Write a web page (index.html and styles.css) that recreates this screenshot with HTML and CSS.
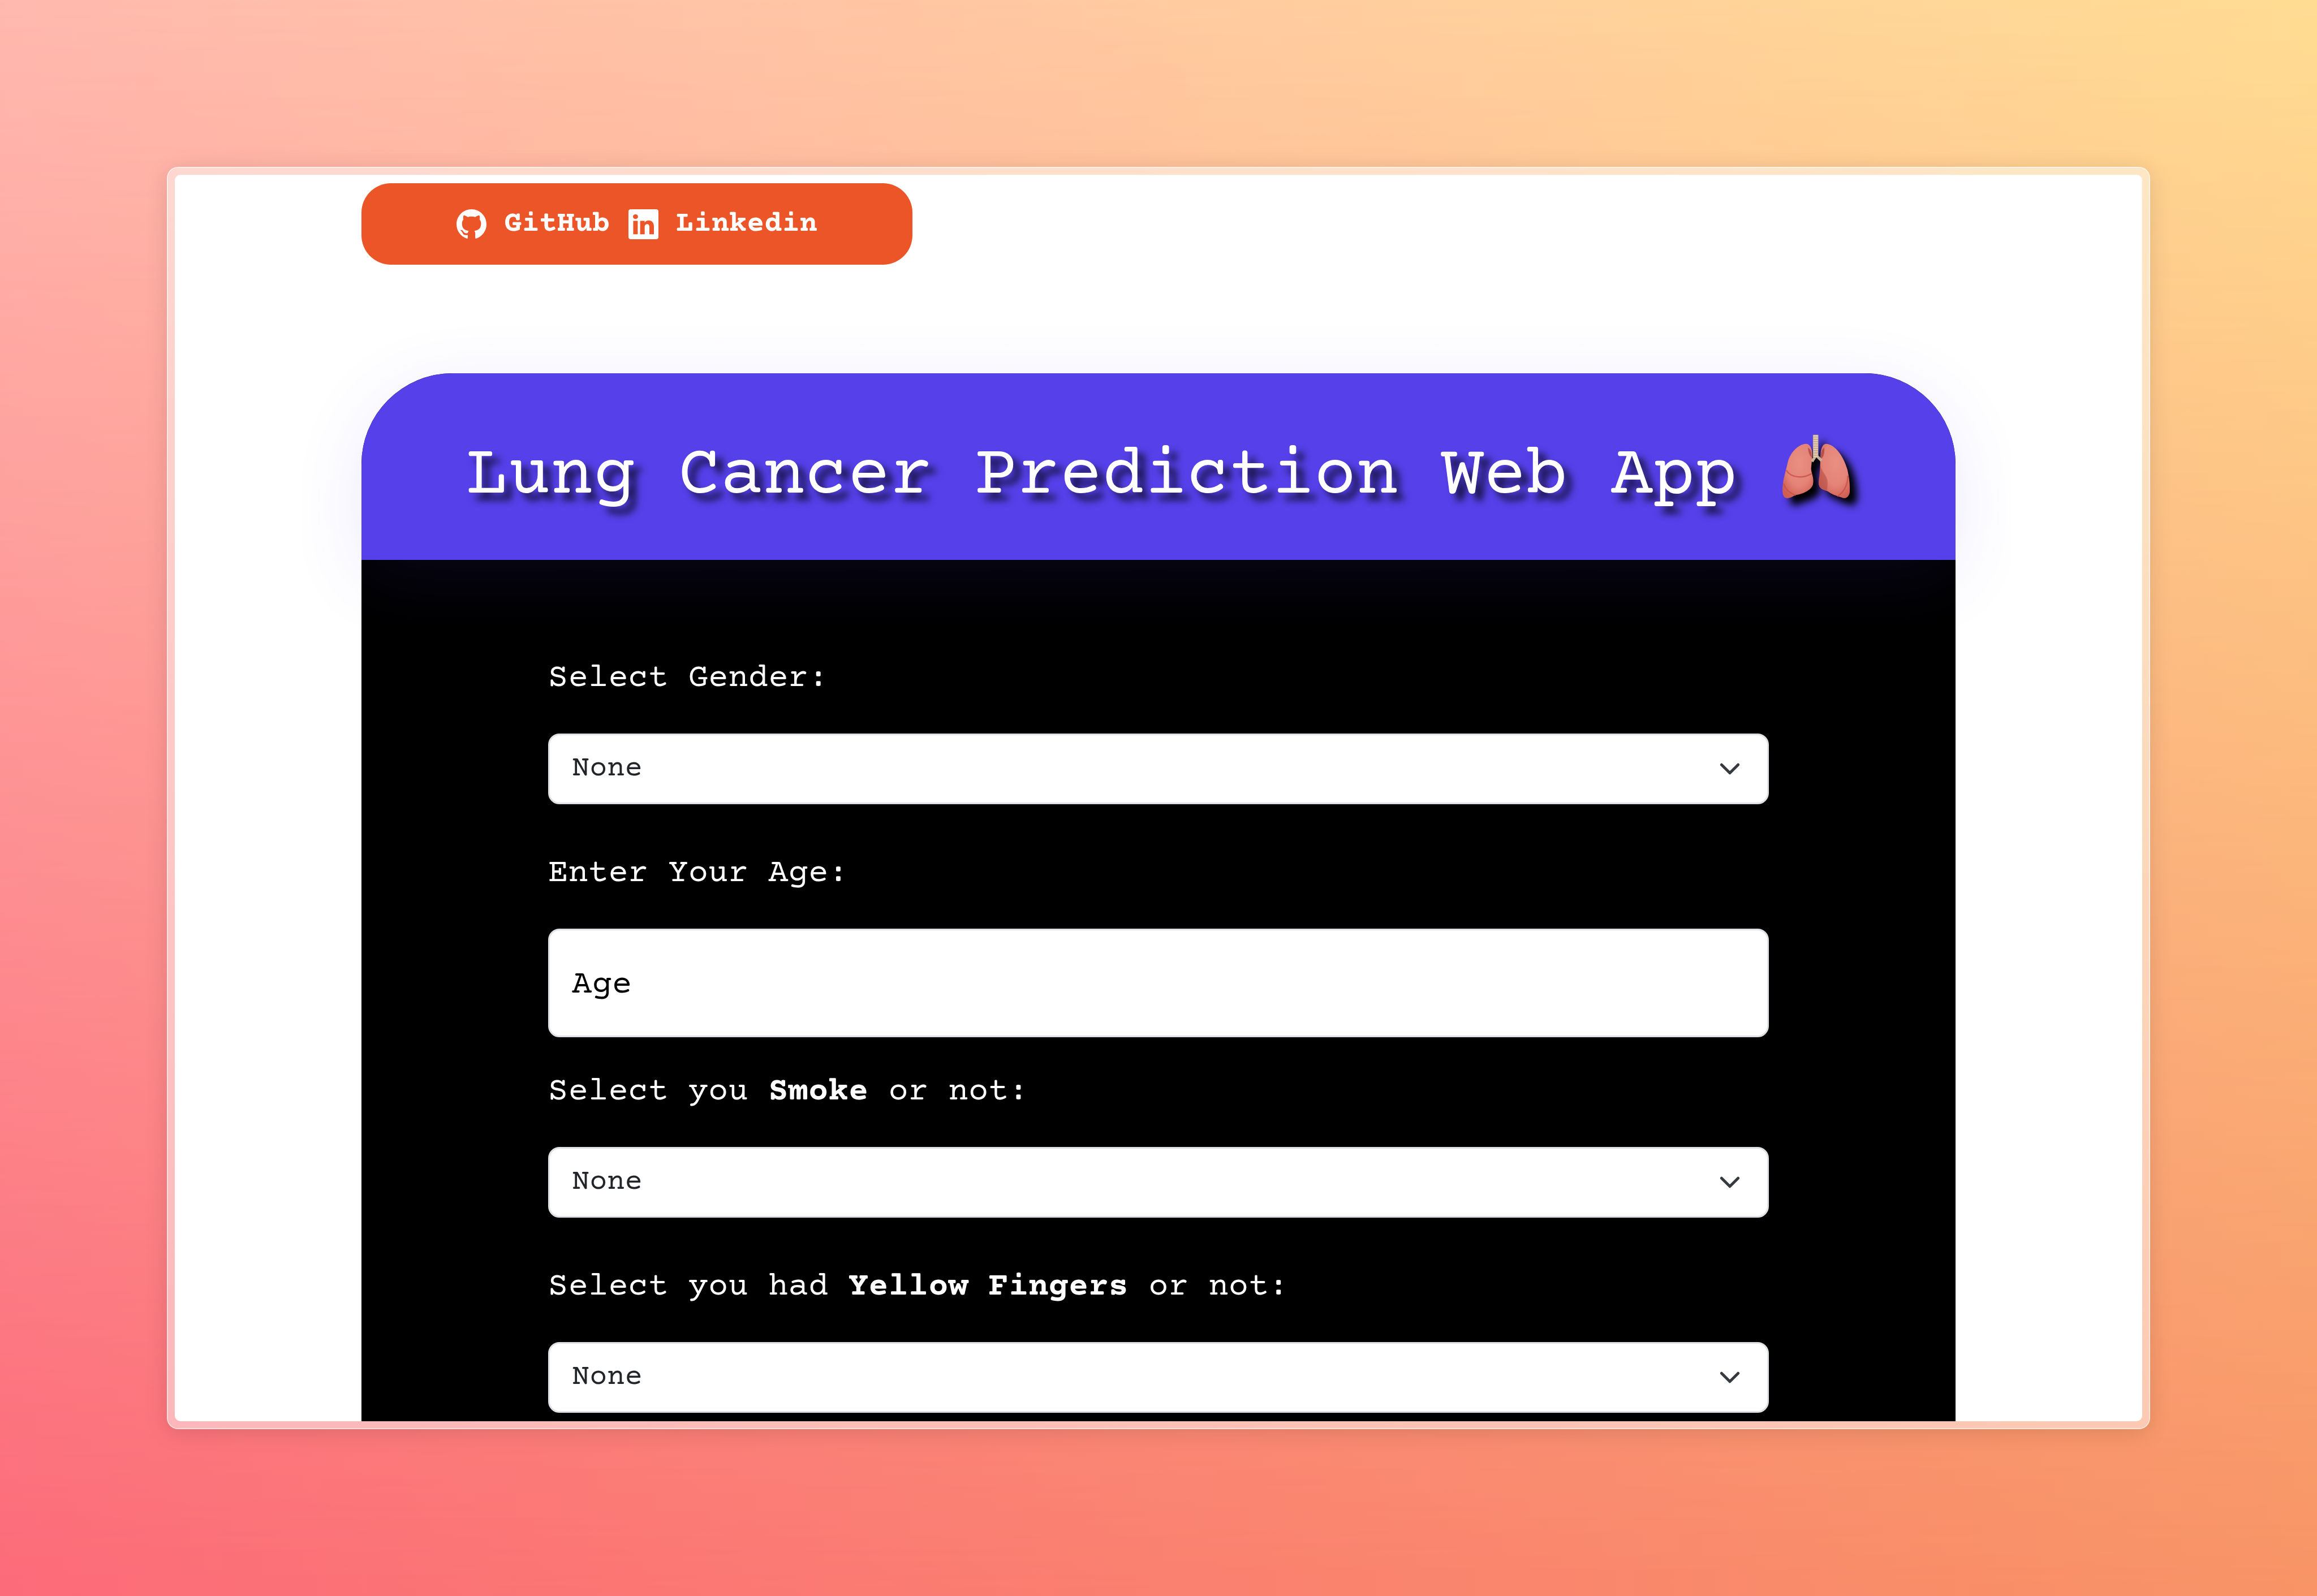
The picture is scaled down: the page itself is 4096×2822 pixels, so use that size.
FILE: index.html
```html
<!DOCTYPE html>
<html lang="en">
<head>
<meta charset="utf-8">
<meta name="viewport" content="width=device-width, initial-scale=1">
<title>Lung Cancer Prediction Web App</title>
<link rel="stylesheet" href="styles.css">
</head>
<body>
<div class="frame">
  <main class="page">
    <nav class="links">
      <a class="link" href="https://github.com/">
        <svg class="link-icon" viewBox="0 0 16 16" aria-hidden="true"><path d="M8 0C3.58 0 0 3.58 0 8c0 3.54 2.29 6.53 5.47 7.59.4.07.55-.17.55-.38 0-.19-.01-.82-.01-1.49-2.01.37-2.53-.49-2.69-.94-.09-.23-.48-.94-.82-1.13-.28-.15-.68-.52-.01-.53.63-.01 1.08.58 1.23.82.72 1.21 1.87.87 2.33.66.07-.52.28-.87.51-1.07-1.78-.2-3.64-.89-3.64-3.95 0-.87.31-1.59.82-2.15-.08-.2-.36-1.02.08-2.12 0 0 .67-.21 2.2.82.64-.18 1.32-.27 2-.27s1.36.09 2 .27c1.53-1.04 2.2-.82 2.2-.82.44 1.1.16 1.92.08 2.12.51.56.82 1.27.82 2.15 0 3.07-1.87 3.75-3.65 3.95.29.25.54.73.54 1.48 0 1.07-.01 1.93-.01 2.2 0 .21.15.46.55.38A8.01 8.01 0 0 0 16 8c0-4.42-3.58-8-8-8"/></svg>
        <span>GitHub</span>
      </a>
      <a class="link" href="https://www.linkedin.com/">
        <svg class="link-icon" viewBox="0 0 16 16" aria-hidden="true"><path d="M0 1.146C0 .513.526 0 1.175 0h13.65C15.474 0 16 .513 16 1.146v13.708c0 .633-.526 1.146-1.175 1.146H1.175C.526 16 0 15.487 0 14.854zm4.943 12.248V6.169H2.542v7.225zm-1.2-8.212c.837 0 1.358-.554 1.358-1.248-.015-.709-.52-1.248-1.342-1.248S2.4 3.226 2.4 3.934c0 .694.521 1.248 1.327 1.248zm4.908 8.212V9.359c0-.216.016-.432.08-.586.173-.431.568-.878 1.232-.878.869 0 1.216.662 1.216 1.634v3.865h2.401V9.25c0-2.22-1.184-3.252-2.764-3.252-1.274 0-1.845.7-2.165 1.193v.025h-.016l.016-.025V6.169h-2.4c.03.678 0 7.225 0 7.225z"/></svg>
        <span>Linkedin</span>
      </a>
    </nav>
    <section class="card">
      <header class="card-header">
        <h1 class="title">Lung Cancer Prediction Web App <svg class="lungs" viewBox="0 0 148 142" role="img" aria-label="Lungs">
          <defs>
            <radialGradient id="lobe" cx=".55" cy=".35" r=".7"><stop offset="0" stop-color="#e98f83"/><stop offset=".6" stop-color="#e58378"/><stop offset="1" stop-color="#cf5d52"/></radialGradient>
          </defs>
          <path d="M52 21C60 21 64 30 65 38C67 50 64 60 63 76C64 88 70 96 67 111C62 125 42 132 28 134C18 140 10 143 5 139C-2 132 0 118 1 108C3 94 8 78 12 60C18 40 34 22 52 21Z" fill="url(#lobe)"/>
          <path d="M95 21C88 22 85 32 84 42C83 60 83 76 82 88C80 100 78 110 82 116C88 124 96 122 102 127C112 134 122 136 130 139C138 143 146 139 148 128C149 112 147 96 143 78C134 46 114 21 95 21Z" fill="url(#lobe)"/>
          <path d="M56 29C63 33 65 42 65 52C60 48 57 40 56 29ZM92 29C86 33 84 42 84 54C91 51 93 41 92 29Z" fill="#a6433e" opacity=".75"/>
          <path d="M83 68C86 82 98 92 99 102C100 112 98 118 98 124C90 122 82 120 80 110C79 98 82 86 83 68Z" fill="#b64e46" opacity=".6"/>
          <path d="M9 80C20 98 48 96 63 87M3 110C8 124 18 130 28 134M144 92C144 112 134 128 122 136" fill="none" stroke="#c85046" stroke-width="3" stroke-linecap="round" opacity=".8"/>
          <path d="M74 46L65 60M74 46L86 58" fill="none" stroke="#c9b095" stroke-width="6"/>
          <path d="M73 1V50" fill="none" stroke="#c4a88c" stroke-width="12"/>
          <path d="M73 2V50" fill="none" stroke="#e0cdb4" stroke-width="10" stroke-dasharray="3 2"/>
        </svg></h1>
      </header>
      <form class="form">
        <label class="label" for="gender">Select Gender:</label>
        <select class="select" id="gender"><option>None</option><option>Male</option><option>Female</option></select>
        <label class="label" for="age">Enter Your Age:</label>
        <input class="input" id="age" type="text" inputmode="numeric" placeholder="Age">
        <label class="label" for="smoke">Select you <b>Smoke</b> or not:</label>
        <select class="select" id="smoke"><option>None</option><option>Yes</option><option>No</option></select>
        <label class="label" for="fingers">Select you had <b>Yellow Fingers</b> or not:</label>
        <select class="select" id="fingers"><option>None</option><option>Yes</option><option>No</option></select>
      </form>
    </section>
  </main>
</div>
</body>
</html>
```
FILE: styles.css
```css
*, *::before { box-sizing: border-box; }

body {
  margin: 0;
  height: 100vh;
  padding: 295px;
  position: relative;
  overflow: hidden;
  background: linear-gradient(to right, #fc6b79, #f89466);
  font-family: "Courier Prime", "Nimbus Mono PS", FreeMono, "Courier New", "Liberation Mono", monospace;
  font-size: 52px;
}

/* warm upper tones fading into the stronger lower ones */
body::before {
  content: "";
  position: absolute;
  inset: 0;
  background: linear-gradient(to right, #ffb9ae, #ffdc93);
  mask-image: linear-gradient(to bottom, #000, transparent);
}

.frame {
  position: relative;
  height: 100%;
  padding: 12px;
  border: 2px solid rgba(255, 255, 255, .75);
  border-radius: 20px;
  background: rgba(255, 255, 255, .48);
  background-clip: padding-box;
  box-shadow: 0 6px 40px rgba(0, 0, 0, .12);
}

.page {
  height: 100%;
  overflow: hidden;
  padding: 15px 330px 0;
  border-radius: 10px;
  background: #fff;
}

.links {
  display: flex;
  align-items: center;
  justify-content: center;
  gap: 33px;
  width: 974px;
  height: 144px;
  border-radius: 52px;
  background: #ec5528;
}

.link {
  display: flex;
  align-items: center;
  gap: 31px;
  color: #fff;
  font-weight: 700;
  text-decoration: none;
}

.link-icon {
  width: 53px;
  height: 53px;
  fill: currentColor;
}

.card {
  margin-top: 192px;
  border-radius: 161px 161px 0 0;
  background: #000;
}

.card-header {
  position: relative;
  height: 330px;
  padding-top: 108px;
  border-radius: 161px 161px 0 0;
  background: #5540e9;
  box-shadow: 0 26px 129px rgba(85, 64, 233, .11);
}

.title {
  margin: 0;
  color: #fff;
  font-size: 125px;
  font-weight: 400;
  line-height: 150px;
  text-align: center;
  white-space: nowrap;
  text-shadow: 13px 13px 13px rgba(0, 0, 0, .75);
}

.lungs {
  width: 119px;
  height: 114px;
  margin: 0 2px 0 4px;
  vertical-align: -11px;
  overflow: visible;
  filter: drop-shadow(13px 13px 7px #000);
}

.form {
  display: flex;
  flex-direction: column;
  padding: 166px 330px;
}

.label {
  margin-bottom: 53px;
  color: #fff;
  font-size: 59px;
  line-height: 88px;
}

.select,
.input {
  width: 100%;
  border: 3px solid #dee2e6;
  border-radius: 20px;
  background-color: #fff;
  font-family: inherit;
}

.select {
  appearance: none;
  height: 125px;
  margin: 0 0 79px;
  padding: 0 116px 0 39px;
  color: #212529;
  font-size: 52px;
  background-image: url("data:image/svg+xml,%3Csvg xmlns='http://www.w3.org/2000/svg' viewBox='0 0 16 16'%3E%3Cpath fill='none' stroke='%23343a40' stroke-linecap='round' stroke-linejoin='round' stroke-width='2' d='m2 5 6 6 6-6'/%3E%3C/svg%3E");
  background-repeat: no-repeat;
  background-position: right 40px center;
  background-size: 52px 39px;
}

.input {
  height: 192px;
  margin: 0 0 53px;
  padding: 8px 39px 0;
  color: #000;
  font-size: 59px;
}

.input::placeholder {
  color: #000;
  opacity: 1;
}
```
